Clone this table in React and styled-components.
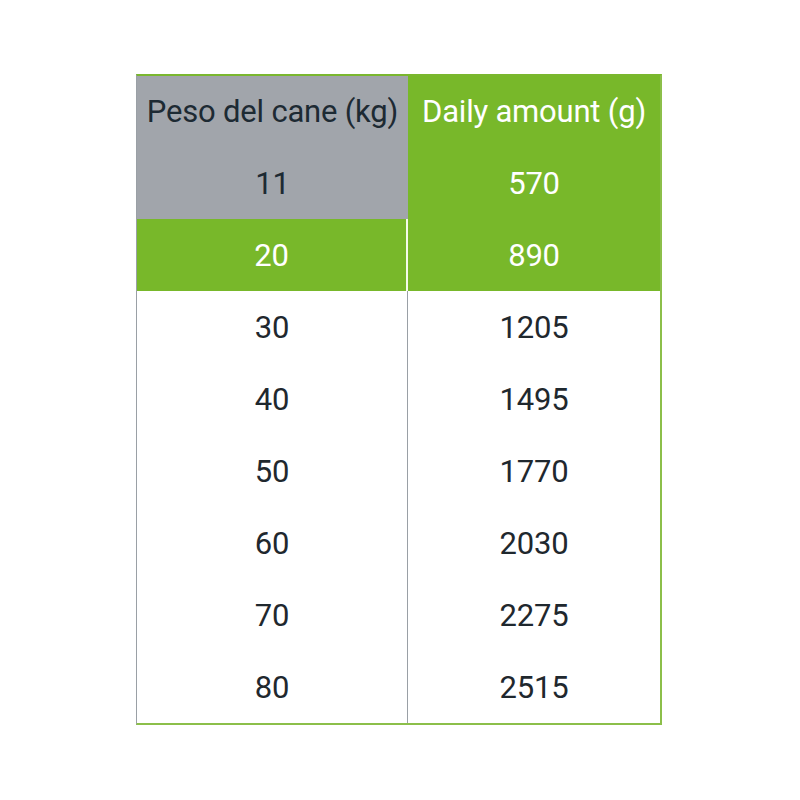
import React from "react";
import styled, { createGlobalStyle } from "styled-components";

const Global = createGlobalStyle`
  html, body { margin: 0; padding: 0; background: #ffffff; }
  body { font-family: Roboto, "Liberation Sans", sans-serif; }
`;

const Page = styled.div`
  width: 800px;
  height: 800px;
  box-sizing: border-box;
  padding-top: 74px;
  padding-left: 136px;
`;

const Table = styled.div`
  display: inline-grid;
  grid-template-columns: 271px 252px;
  border-top: 2px solid #7ab72e;
  border-bottom: 2px solid #8cbf4a;
  border-left: 1px solid #9aa0a6;
  border-right: 2px solid #8cbf4a;
`;

const Cell = styled.div`
  height: ${(p) => (p.$first ? 71 : 72)}px;
  display: flex;
  align-items: center;
  justify-content: center;
  font-size: 31px;
  font-weight: 400;
  letter-spacing: -0.2px;
  color: ${(p) => (p.$tone === "white" ? "#1f282e" : p.$tone === "gray" ? "#1d2a33" : "#ffffff")};
  background: ${(p) =>
    p.$tone === "gray" ? "#a1a5ab" : p.$tone === "green" ? "#78b82a" : "#ffffff"};
  border-right: ${(p) =>
    p.$left ? (p.$tone === "white" ? "1px solid #9aa0a6" : p.$tone === "green" ? "2px solid #f4faea" : "none") : "none"};
  box-sizing: border-box;
`;

const rows = [
  ["Peso del cane (kg)", "Daily amount (g)", "gray"],
  ["11", "570", "gray"],
  ["20", "890", "green"],
  ["30", "1205", "white"],
  ["40", "1495", "white"],
  ["50", "1770", "white"],
  ["60", "2030", "white"],
  ["70", "2275", "white"],
  ["80", "2515", "white"],
];

export default function App() {
  return (
    <>
      <Global />
      <Page>
        <Table>
          {rows.map(([a, b, tone], i) => (
            <React.Fragment key={i}>
              <Cell $tone={tone} $left $first={i === 0}>{a}</Cell>
              <Cell $tone={tone === "white" ? "white" : "green"} $first={i === 0}>{b}</Cell>
            </React.Fragment>
          ))}
        </Table>
      </Page>
    </>
  );
}
